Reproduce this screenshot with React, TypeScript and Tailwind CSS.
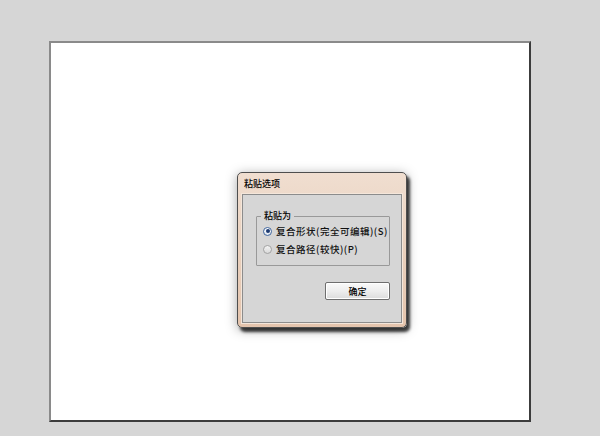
import { useState } from "react";

const cjk = { fontFamily: '"Noto Sans CJK SC", "Noto Sans", sans-serif' };

function Radio({ checked }: { checked: boolean }) {
  return (
    <span
      className={`flex items-center justify-center w-[9px] h-[9px] rounded-full border ${
        checked
          ? "border-[#41679f] bg-gradient-to-b from-[#ffffff] to-[#dfe6ef]"
          : "border-[#a3a3a3] bg-gradient-to-b from-[#f4f4f4] to-[#d9d9d9]"
      }`}
    >
      {checked && <span className="w-[4px] h-[4px] rounded-full bg-[#1c3a72]" />}
    </span>
  );
}

function App() {
  const [mode, setMode] = useState("shape");

  return (
    <div className="w-[600px] h-[436px] bg-[#d6d6d6] pt-[41px] pl-[49px] overflow-hidden" style={cjk}>
      {/* artboard */}
      <div className="w-[482px] h-[381px] bg-white border-2 border-t-[#8a8a8a] border-l-[#8a8a8a] border-r-[#3c3c3c] border-b-[#3c3c3c] pl-[186px] pt-[129px]">
        {/* dialog */}
        <div className="w-[170px] h-[156px] rounded-[5px] border border-[#4e4e4e] bg-gradient-to-b from-[#f0ded0] via-[#e9d0bd] to-[#e4c4ad] shadow-[3px_4px_3px_rgba(0,0,0,0.75),0_2px_12px_rgba(0,0,0,0.35)] flex flex-col px-[4px] pb-[4px]">
          <div className="h-[21px] flex items-center pl-[2px] text-[9px] font-medium text-black leading-none">粘贴选项</div>
          <div className="flex-1 border border-[#8c8c8c] bg-[#d6d6d6] shadow-[0_0_0_1px_#f4e6da] flex flex-col pl-[13px] pr-[11px] pt-[21px]">
            <div className="relative border border-[#999999] rounded-[1px] h-[50px] flex flex-col pl-[6px] pt-[9px] gap-[8px]">
              <span className="absolute -top-[7px] left-[4px] px-[3px] bg-[#d6d6d6] text-[9px] font-medium leading-[12px] text-black">粘贴为</span>
              <label className="flex items-center gap-[4px] text-[9.5px] font-medium leading-[10px] text-[#111]" onClick={() => setMode("shape")}>
                <Radio checked={mode === "shape"} />
                <span className="tracking-[0.5px]">复合形状(完全可编辑)(S)</span>
              </label>
              <label className="flex items-center gap-[4px] text-[9.5px] font-medium leading-[10px] text-[#111]" onClick={() => setMode("path")}>
                <Radio checked={mode === "path"} />
                <span className="tracking-[0.5px]">复合路径(较快)(P)</span>
              </label>
            </div>
            <div className="flex justify-end mt-[16px]">
              <button className="w-[65px] h-[18px] border border-[#6e6e6e] rounded-[2px] bg-gradient-to-b from-[#fafafa] via-[#eeeeee] to-[#dcdcdc] shadow-[inset_0_0_0_1px_#ffffff] text-[9px] font-medium leading-none text-black">
                确定
              </button>
            </div>
          </div>
        </div>
      </div>
    </div>
  );
}

export default App;
